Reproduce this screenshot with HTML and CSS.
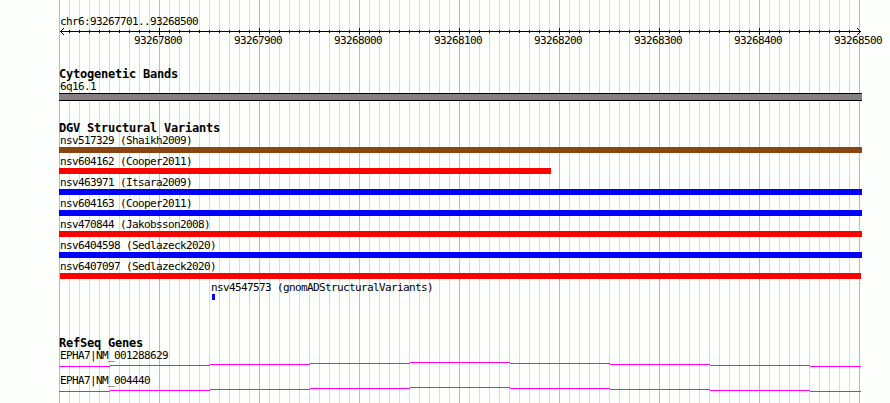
FILE: index.html
```html
<!DOCTYPE html>
<html lang="en">
<head>
    <meta charset="UTF-8">
    <title>chr6:93267701..93268500</title>
    <link rel="stylesheet" href="styles.css">
</head>
<body>
    <div class="browser">
        <header class="overview">
            <div class="label">chr6:93267701..93268500</div>
            <svg class="ruler" width="803" height="7" shape-rendering="crispEdges">
                <defs>
                    <pattern id="ticks" x="0" y="0" width="10" height="7" patternUnits="userSpaceOnUse">
                        <rect x="0" y="2" width="1" height="3"/>
                    </pattern>
                    <pattern id="majorTicks" x="0" y="0" width="100" height="7" patternUnits="userSpaceOnUse">
                        <rect x="0" y="0" width="1" height="7"/>
                    </pattern>
                </defs>
                <rect x="1" y="3" width="801" height="1"/>
                <rect x="10" y="0" width="790" height="7" fill="url(#ticks)"/>
                <rect x="100" y="0" width="700" height="7" fill="url(#majorTicks)"/>
                <path d="M1 3h1v1h-1zM2 2h1v1h-1zM3 1h1v1h-1zM4 0h1v1h-1zM2 4h1v1h-1zM3 5h1v1h-1zM4 6h1v1h-1z"/>
                <path d="M798 0h1v1h-1zM799 1h1v1h-1zM800 2h1v1h-1zM800 4h1v1h-1zM799 5h1v1h-1zM798 6h1v1h-1z"/>
            </svg>
            <div class="scale">
                <span>93267800</span>
                <span>93267900</span>
                <span>93268000</span>
                <span>93268100</span>
                <span>93268200</span>
                <span>93268300</span>
                <span>93268400</span>
                <span>93268500</span>
            </div>
        </header>

        <section class="track bands">
            <h2>Cytogenetic Bands</h2>
            <div class="label">6q16.1</div>
            <div class="band"></div>
        </section>

        <section class="track variants">
            <h2>DGV Structural Variants</h2>
            <div class="feature">
                <div class="label">nsv517329 (Shaikh2009)</div>
                <div class="bar mixed"></div>
            </div>
            <div class="feature">
                <div class="label">nsv604162 (Cooper2011)</div>
                <div class="bar loss partial"></div>
            </div>
            <div class="feature">
                <div class="label">nsv463971 (Itsara2009)</div>
                <div class="bar gain"></div>
            </div>
            <div class="feature">
                <div class="label">nsv604163 (Cooper2011)</div>
                <div class="bar gain"></div>
            </div>
            <div class="feature">
                <div class="label">nsv470844 (Jakobsson2008)</div>
                <div class="bar loss"></div>
            </div>
            <div class="feature">
                <div class="label">nsv6404598 (Sedlazeck2020)</div>
                <div class="bar gain"></div>
            </div>
            <div class="feature">
                <div class="label">nsv6407097 (Sedlazeck2020)</div>
                <div class="bar loss inset"></div>
            </div>
            <div class="feature short">
                <div class="label">nsv4547573 (gnomADStructuralVariants)</div>
                <div class="bar gain"></div>
            </div>
        </section>

        <section class="track genes">
            <h2>RefSeq Genes</h2>
            <div class="gene">
                <div class="label">EPHA7|NM_001288629</div>
                <svg width="803" height="5">
                    <path d="M0 4.5H51M51 3.5H151M151 2.5H251M251 1.5H351M351 .5H451M451 1.5H551M551 2.5H651M651 3.5H751M751 4.5H802"/>
                </svg>
            </div>
            <div class="gene">
                <div class="label">EPHA7|NM_004440</div>
                <svg width="803" height="5">
                    <path d="M0 4.5H51M51 3.5H151M151 2.5H251M251 1.5H351M351 .5H451M451 1.5H551M551 2.5H651M651 3.5H751M751 4.5H802"/>
                </svg>
            </div>
        </section>
    </div>
</body>
</html>
```

FILE: styles.css
```css
* { box-sizing: border-box; }
body { margin: 0; background: #fdfffc; color: #000; font: 11px/13px 'DejaVu Sans Mono', monospace; overflow: hidden; }
svg { display: block; }

/* grid lines: dark every 100bp, light every 10bp */
.browser {
    width: 803px;
    height: 403px;
    margin-left: 59px;
    padding-top: 15px;
    background-image:
        repeating-linear-gradient(90deg, #87ceeb 0, #87ceeb 1px, transparent 1px, transparent 100px),
        repeating-linear-gradient(90deg, #afeeee 0, #afeeee 1px, transparent 1px, transparent 10px);
}

.label { height: 13px; padding-left: 1px; letter-spacing: -0.622px; white-space: nowrap; }
h2 { height: 12px; margin: 0; font-size: 12px; line-height: 12px; letter-spacing: -0.224px; white-space: nowrap; }

.scale { display: grid; grid-template-columns: repeat(8, 100px); width: 800px; height: 12px; margin: -1px 0 0 75px; letter-spacing: -0.622px; }

.bands { margin-top: 22px; }
.band { height: 8px; background: #848084; border: solid #000; border-width: 1px 0; }

.variants { margin-top: 21px; }
.feature { height: 21px; }
.bar { height: 6px; }
.mixed { background: #8b4513; }
.loss { background: #ff0000; }
.gain { background: #0000ff; }
.partial { width: 492px; }
.inset { margin: 0 1px; }
.short { padding-left: 151px; }
.short .bar { width: 3px; margin-left: 2px; }

.genes { margin-top: 35px; }
.gene { height: 25px; }
.gene svg { stroke: #ff00ff; fill: none; }
```
